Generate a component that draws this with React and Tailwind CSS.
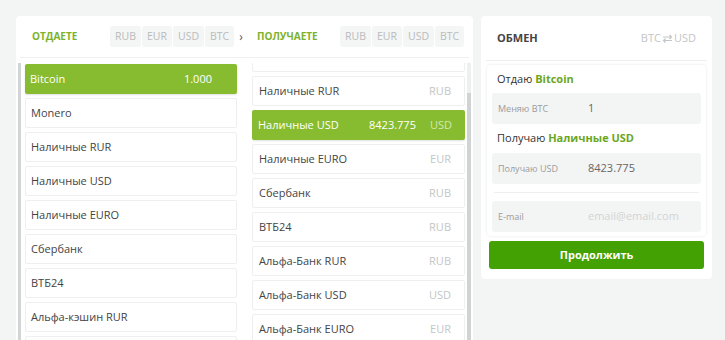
import React from "react";

const tabs = [
  { t: "RUB", w: "w-[31px]" },
  { t: "EUR", w: "w-[30px]" },
  { t: "USD", w: "w-[31px]" },
  { t: "BTC", w: "w-[29px]" },
];

function Tabs() {
  return (
    <div className="flex gap-[1px] shrink-0">
      {tabs.map((t) => (
        <div key={t.t} className={`${t.w} h-[21px] flex items-center justify-center rounded-[3px] bg-[#f4f5f5] text-[10.5px] text-[#b9bcbc]`}>
          {t.t}
        </div>
      ))}
    </div>
  );
}

const leftItems = [
  { name: "Bitcoin", amount: "1.000", active: true },
  { name: "Monero" },
  { name: "Наличные RUR" },
  { name: "Наличные USD" },
  { name: "Наличные EURO" },
  { name: "Сбербанк" },
  { name: "ВТБ24" },
  { name: "Альфа-кэшин RUR" },
  { name: "Альфа-кэшин USD" },
];

const rightItems = [
  { name: "", cur: "" },
  { name: "Наличные RUR", cur: "RUB" },
  { name: "Наличные USD", cur: "USD", amount: "8423.775", active: true },
  { name: "Наличные EURO", cur: "EUR" },
  { name: "Сбербанк", cur: "RUB" },
  { name: "ВТБ24", cur: "RUB" },
  { name: "Альфа-Банк RUR", cur: "RUB" },
  { name: "Альфа-Банк USD", cur: "USD" },
  { name: "Альфа-Банк EURO", cur: "EUR" },
];

function LeftItem({ item }) {
  return item.active ? (
    <div className="h-[30px] shrink-0 flex items-center justify-between pl-[5px] pr-[25px] rounded-[2px] bg-[#88bc30] text-white text-[11px] shadow-[0_1px_2px_rgba(0,0,0,0.12)]">
      <span>{item.name}</span>
      <span>{item.amount}</span>
    </div>
  ) : (
    <div className="h-[30px] shrink-0 flex items-center pl-[5px] rounded-[2px] bg-white border border-[#eeefef] text-[#444] text-[11px]">
      {item.name}
    </div>
  );
}

function RightItem({ item }) {
  return item.active ? (
    <div className="h-[30px] shrink-0 flex items-center pl-[6px] pr-[13px] rounded-[2px] bg-[#88bc30] text-white text-[11px] shadow-[0_1px_2px_rgba(0,0,0,0.12)]">
      <span className="flex-1">{item.name}</span>
      <span className="mr-[14px]">{item.amount}</span>
      <span className="text-[#d4e8b0]">{item.cur}</span>
    </div>
  ) : (
    <div className="h-[30px] shrink-0 flex items-center pl-[6px] pr-[13px] rounded-[2px] bg-white border border-[#eeefef] text-[#444] text-[11px]">
      <span className="flex-1">{item.name}</span>
      <span className="text-[#c3c6c6]">{item.cur}</span>
    </div>
  );
}

function Field({ label, value, placeholder }) {
  return (
    <div className="h-[31px] flex items-center rounded-[3px] bg-[#f3f4f4]">
      <span className="w-[96px] pl-[6px] text-[9px] text-[#9a9d9d]">{label}</span>
      {value ? (
        <span className="text-[11px] text-[#666]">{value}</span>
      ) : (
        <span className="text-[11px] text-[#d2d4d4]">{placeholder}</span>
      )}
    </div>
  );
}

export default function App() {
  return (
    <div
      className="w-[725px] h-[340px] overflow-hidden bg-[#f3f4f4] flex items-start gap-[8px] pt-[16px] pl-[16px]"
      style={{ fontFamily: '"Open Sans", "Liberation Sans", sans-serif' }}
    >
      {/* Left card */}
      <div className="w-[457px] h-[400px] shrink-0 bg-white rounded-[4px] flex flex-col">
        <div className="h-[41px] shrink-0 flex items-center pl-[16px]">
          <span className="w-[78px] shrink-0 text-[10px] font-bold text-[#7db22d]">ОТДАЕТЕ</span>
          <Tabs />
          <span className="w-[14px] shrink-0 text-center text-[12px] text-[#555]">›</span>
          <span className="ml-[9px] w-[83px] shrink-0 text-[10px] font-bold text-[#7db22d]">ПОЛУЧАЕТЕ</span>
          <Tabs />
        </div>
        <div className="mx-[4px] h-px bg-[#eeefef]" />
        <div className="flex flex-1 mt-[5px] pl-[2px] gap-[12px] min-h-0">
          {/* left list */}
          <div className="w-[222px] flex gap-[4px] min-h-0">
            <div className="w-[3px] bg-[#d2d5d5]" />
            <div className="w-[212px] flex flex-col gap-[4px] pt-px">
              {leftItems.map((it) => (
                <LeftItem key={it.name} item={it} />
              ))}
            </div>
          </div>
          {/* right list */}
          <div className="w-[219px] flex gap-[2px] min-h-0">
            <div className="w-[213px] overflow-hidden">
              <div className="flex flex-col gap-[4px] mt-[-21px]">
                {rightItems.map((it, i) => (
                  <RightItem key={i} item={it} />
                ))}
              </div>
            </div>
            <div className="w-[4px] bg-[#eef0f0] flex flex-col">
              <div className="h-[30px]" />
              <div className="flex-1 bg-[#cfd3d3]" />
            </div>
          </div>
        </div>
      </div>

      {/* Right card */}
      <div className="w-[231px] shrink-0 bg-white rounded-[4px] flex flex-col pb-[10px]">
        <div className="h-[44px] flex items-center justify-between px-[16px] pt-px">
          <span className="text-[11px] font-bold text-[#444]">ОБМЕН</span>
          <span className="text-[11px] text-[#c3c6c6] flex items-center gap-[1px]">
            BTC
            <svg width="11" height="9" viewBox="0 0 11 9" fill="none" stroke="#c3c6c6" strokeWidth="1.2">
              <path d="M1 3h8.5M7.5 1l2 2-2 2" />
              <path d="M10 6.5H1.5M3.5 4.5l-2 2 2 2" />
            </svg>
            USD
          </span>
        </div>
        <div className="mx-[5px] h-px bg-[#eeefef]" />
        <div className="mx-[6px] mt-[4px] rounded-[4px] bg-white shadow-[0_0_3px_rgba(0,0,0,0.1)] px-[5px] pb-[4px]">
          <div className="h-[28px] flex items-center pl-[5px] text-[11px] text-[#333]">
            Отдаю&nbsp;<span className="font-bold text-[#6ba622]">Bitcoin</span>
          </div>
          <Field label="Меняю BTC" value="1" />
          <div className="h-[29px] flex items-center pl-[5px] text-[11px] text-[#333]">
            Получаю&nbsp;<span className="font-bold text-[#6ba622]">Наличные USD</span>
          </div>
          <Field label="Получаю USD" value="8423.775" />
          <div className="mx-[2px] my-[8px] h-px bg-[#eeefef]" />
          <Field label="E-mail" placeholder="email@email.com" />
        </div>
        <button className="mx-[8px] mt-[5px] h-[28px] rounded-[3px] bg-[#44a103] text-white text-[11px] font-bold">
          Продолжить
        </button>
      </div>
    </div>
  );
}
